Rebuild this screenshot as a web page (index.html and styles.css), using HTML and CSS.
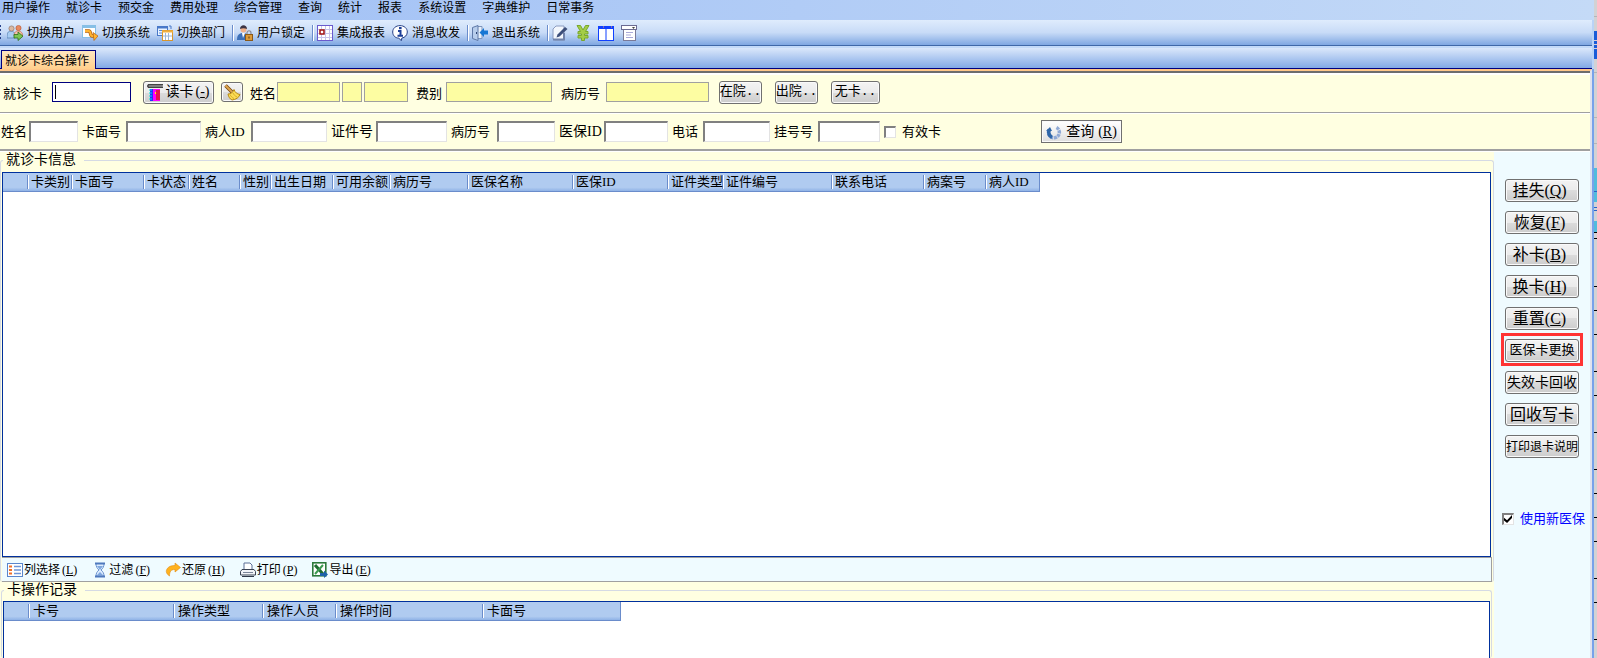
FILE: index.html
```html
<!DOCTYPE html>
<html lang="zh-CN">
<head>
  <meta charset="UTF-8" />
  <meta name="viewport" content="width=device-width, initial-scale=1.0" />
  <title>就诊卡综合操作</title>
  <link rel="stylesheet" href="styles.css">
</head>
<body>

  <div class="window">
    <nav class="menubar">
      <a href="#">用户操作</a>
      <a href="#">就诊卡</a>
      <a href="#">预交金</a>
      <a href="#">费用处理</a>
      <a href="#">综合管理</a>
      <a href="#">查询</a>
      <a href="#">统计</a>
      <a href="#">报表</a>
      <a href="#">系统设置</a>
      <a href="#">字典维护</a>
      <a href="#">日常事务</a>
    </nav>

    <div class="toolbar">
      <span class="grip"></span>
      <button>
        <svg width="16" height="16" viewBox="0 0 16 16"><path d="M0 13c0-5 1-7 4-7s4 2 4 7z" fill="#a9cdf2" stroke="#4f79ad" stroke-width=".7"/><path d="M7 11c0-4 2-5 4.500-5S16 8 15.500 11z" fill="#f4c4ae" stroke="#c45e3c" stroke-width=".6"/><circle cx="4.500" cy="3.500" r="2.600" fill="#d9b8a2" stroke="#8a6a5a" stroke-width=".6"/><circle cx="11.500" cy="3" r="2.600" fill="#e88a62" stroke="#b5502c" stroke-width=".6"/><path d="M7 9.500h4V7l5 4.200-5 4.300V13H7z" fill="#7cc653" stroke="#2c6f1a" stroke-width=".8"/></svg>
        切换用户
      </button>
      <button>
        <svg width="16" height="16" viewBox="0 0 16 16"><rect x=".5" y=".5" width="13" height="12" fill="#fff" stroke="#86bfe6"/><path d="M1 2h12" stroke="#86bfe6" stroke-width="2"/><path d="M3 6h4c2 0 1 5 3 5h2" fill="none" stroke="#b8620c" stroke-width="3.500"/><path d="M3 6h4c2 0 1 5 3 5h2" fill="none" stroke="#ffb432" stroke-width="2"/><path d="M11 7.500l5 3.500-4 4.500z" fill="#ffb432" stroke="#b8620c" stroke-width=".7"/></svg>
        切换系统
      </button>
      <button>
        <svg width="16" height="16" viewBox="0 0 16 16"><rect x=".5" y="1.500" width="10" height="9" fill="#eaf3ff" stroke="#4878c8"/><path d="M0 2.500h11" stroke="#4878c8" stroke-width="2"/><path d="M2 5.500h4M2 8h3" stroke="#5b8ad6"/><rect x="5.500" y="5.500" width="10" height="10" fill="#fff" stroke="#d9962c"/><path d="M5 6.500h11" stroke="#f0b040" stroke-width="2"/><path d="M8.500 8v7M11.500 8v7M6 11h9" stroke="#9cb6d8"/><path d="M12 1h2v3" stroke="#4878c8" fill="none"/></svg>
        切换部门
      </button>
      <span class="sep"></span>
      <button>
        <svg width="16" height="16" viewBox="0 0 16 16"><path d="M0 15c0-5 2-7 6-7s6 2 6 7z" fill="#3d70b8"/><path d="M5 8l1 5 2-5z" fill="#fff"/><circle cx="6.500" cy="4.500" r="3" fill="#efb08a"/><path d="M3 4c0-5 7-5 7 0-2-1-5-1-7 0z" fill="#3b3345"/><path d="M10 10V8c0-3 4-3 4 0v2" fill="none" stroke="#8a8a94" stroke-width="1.200"/><rect x="8.500" y="9.500" width="7" height="6" fill="#dc9a3a" stroke="#8b5a18"/><path d="M12 11.500v2" stroke="#5a3a10"/></svg>
        用户锁定
      </button>
      <span class="sep"></span>
      <button>
        <svg width="16" height="16" viewBox="0 0 16 16"><rect x=".5" y=".5" width="15" height="15" fill="#fff" stroke="#6a5acd"/><path d="M4.500 1v14M8.500 1v14M12.500 1v14M1 4.500h14M1 8.500h14M1 12.500h14" stroke="#c8c4ea"/><rect x="3" y="5" width="4" height="4" fill="#fff" stroke="#a01010" stroke-width="1.500"/></svg>
        集成报表
      </button>
      <button>
        <svg width="16" height="16" viewBox="0 0 16 16"><path d="M8 .6c4.200 0 7.300 2.700 7.300 6.400 0 3.200-2.300 5.500-5.500 6.100l-.4 2.600-2.600-2.500C3 12.900.7 10.400.7 7 .7 3.300 3.800.6 8 .6z" fill="#fff" stroke="#243f86"/><rect x="7" y="2" width="2.600" height="2.200" fill="#1d3f98"/><path d="M6 6h2.500v4.500M5.500 10.800h5.500" fill="none" stroke="#1d3f98" stroke-width="2"/></svg>
        消息收发
      </button>
      <span class="sep"></span>
      <button>
        <svg width="16" height="16" viewBox="0 0 16 16"><path d="M4 1.500h6v12H4" fill="#e7f0fb" stroke="#7d95bd"/><path d="M.5 2.500L6 .5v15l-5.500-2z" fill="#b7cdec" stroke="#5f79a8"/><path d="M4.500 7v2" stroke="#2d4472"/><path d="M16 5.500h-4V3L7.500 7.500l4.500 4.500V9.500h4z" fill="#1777d4"/></svg>
        退出系统
      </button>
      <span class="sep"></span>
      <button title="编辑">
        <svg width="16" height="16" viewBox="0 0 16 16"><path d="M1 4l3-3h8v14H3l-2-1z" fill="#f3f7fd" stroke="#8c9cc0"/><path d="M1 14.500h11V8" fill="none" stroke="#7183ab" stroke-width="2"/><path d="M13 2l2.500 2-8 7.500-3 1 1-3z" fill="#3d4f7a"/></svg>
      </button>
      <button title="收费">
        <svg width="16" height="16" viewBox="0 0 16 16"><path d="M2 .5h3.500L8 5l2.500-4.500H14L10.500 6.500H13V9H9.500v1.500H13V13H9.500v2.500h-3V13H3v-2.500h3.500V9H3V6.500h2.500z" fill="#a4cd48" stroke="#79a82a"/></svg>
      </button>
      <button title="平铺">
        <svg width="16" height="16" viewBox="0 0 16 16"><rect x=".5" y="2" width="15" height="13.500" fill="#fff" stroke="#1040ff"/><path d="M0 2.500h16" stroke="#1040ff" stroke-width="3"/><path d="M8 2v14" stroke="#1040ff"/><path d="M5 2h1M13 2h1" stroke="#ff9a50"/></svg>
      </button>
      <button title="窗口">
        <svg width="16" height="16" viewBox="0 0 16 16"><rect x="2.500" y="4.500" width="12" height="11" fill="#fff" stroke="#7a7a98"/><rect x=".5" y=".5" width="15" height="4" fill="#fff" stroke="#6a6a92"/><path d="M11 2h3l-1.500 2z" fill="#444"/><path d="M5 7.500h7M5 10h5M5 12.500h7" stroke="#a9a9d8"/></svg>
      </button>
    </div>

    <div class="tabs">
      <a href="#" class="tab">就诊卡综合操作</a>
    </div>

    <div class="workspace">
      <form class="page">
        <div class="card-row">
          <div class="field">
            <label for="cardNo" class="l-card">就诊卡</label>
            <input type="text" id="cardNo" class="focused w-card">
          </div>
          <button type="button" class="btn read-btn">
            <svg width="16" height="17" viewBox="0 0 16 17"><path d="M1 .5h15v3H1z" fill="#ddd" stroke="#444"/><path d="M0 2h15" stroke="#222"/><rect x="3" y="5" width="3" height="12" fill="#2b2bff"/><rect x="6" y="5" width="7" height="12" fill="#f0f"/><rect x="9" y="6" width="4" height="10" fill="#e8124c"/><path d="M2 6h3M2 9h3M2 12h3M2 15h3" stroke="#00e0e0"/><path d="M8.500 8v2" stroke="#ff0"/></svg>
            读卡<span>(<u>-</u>)</span>
          </button>
          <button type="button" class="btn clear-btn" title="清空">
            <svg width="17" height="17" viewBox="0 0 17 17"><path d="M1.500 1.500L8 8" stroke="#7a4a10" stroke-width="3.500"/><path d="M1.500 1.500L8 8" stroke="#e0a850" stroke-width="1.800"/><path d="M10 5.500c1 3 3 4.500 6 5-1 3-4 5-8 5.500-2-1-3.500-3-4-6 3 0 5-1.500 6-4.500z" fill="#fbdc55" stroke="#b98a12"/><path d="M6 10.500c1 2 2 3 4 4M9 9c1 2 2 3 4 4" fill="none" stroke="#d9ab28"/></svg>
          </button>
          <div class="field">
            <label for="name" class="l-name">姓名</label>
            <input type="text" id="name" class="locked w-name" readonly>
            <input type="text" class="locked w-sex" aria-label="性别" readonly>
            <input type="text" class="locked w-age" aria-label="年龄" readonly>
          </div>
          <div class="field">
            <label for="feeType" class="l-fee">费别</label>
            <input type="text" id="feeType" class="locked w-fee" readonly>
          </div>
          <div class="field">
            <label for="recordNo" class="l-record">病历号</label>
            <input type="text" id="recordNo" class="locked w-record" readonly>
          </div>
          <div class="status-btns">
            <button type="button" class="btn">在院..</button>
            <button type="button" class="btn">出院..</button>
            <button type="button" class="btn wide">无卡..</button>
          </div>
        </div>

        <div class="search-row">
          <label for="qName" class="first">姓名</label><input type="text" id="qName">
          <label for="qFace">卡面号</label><input type="text" id="qFace">
          <label for="qPid">病人ID</label><input type="text" id="qPid">
          <label for="qCert" class="large">证件号</label><input type="text" id="qCert">
          <label for="qRecord">病历号</label><input type="text" id="qRecord">
          <label for="qIns" class="large">医保ID</label><input type="text" id="qIns">
          <label for="qTel">电话</label><input type="text" id="qTel">
          <label for="qReg">挂号号</label><input type="text" id="qReg">
          <label class="check"><input type="checkbox">有效卡</label>
          <button type="button" class="btn query-btn">
            <svg width="16" height="16" viewBox="0 0 16 16"><path d="M10.500 3.500a5.500 5.500 0 1 1-7 1.500" fill="none" stroke="#8fa9d6" stroke-width="3.400" stroke-dasharray="3 .7"/><path d="M6 13.300A5.500 5.500 0 0 1 3.200 6" fill="none" stroke="#2f66a8" stroke-width="3.600"/><path d="M0 7l4-4 2 4z" fill="#2f66a8"/></svg>
            查询<span>(<u>R</u>)</span>
          </button>
        </div>

        <div class="content">
          <div class="main">
            <fieldset class="info">
              <legend>就诊卡信息</legend>
              <div class="grid-box">
                <table class="info-table">
                  <colgroup>
                    <col class="c26"><col class="c44"><col class="c72"><col class="c45">
                    <col class="c51"><col class="c31"><col class="c62"><col class="c57">
                    <col class="c78"><col class="c105"><col class="c95"><col class="c55">
                    <col class="c109"><col class="c92"><col class="c62"><col class="c52">
                  </colgroup>
                  <thead>
                    <tr>
                      <th></th>
                      <th>卡类别</th>
                      <th>卡面号</th>
                      <th>卡状态</th>
                      <th>姓名</th>
                      <th>性别</th>
                      <th>出生日期</th>
                      <th>可用余额</th>
                      <th>病历号</th>
                      <th>医保名称</th>
                      <th>医保ID</th>
                      <th>证件类型</th>
                      <th>证件编号</th>
                      <th>联系电话</th>
                      <th>病案号</th>
                      <th>病人ID</th>
                    </tr>
                  </thead>
                </table>
              </div>
              <div class="grid-tools">
                <button type="button">
                  <svg width="16" height="14" viewBox="0 0 16 14"><rect x=".5" y=".5" width="15" height="13" fill="#fff" stroke="#5a86cc"/><path d="M2 3.500h3M2 10.500h3" stroke="#f07028" stroke-width="2"/><path d="M2 7h3" stroke="#f07028" stroke-width="2"/><path d="M7 3.500h7M7 7h7M7 10.500h7" stroke="#6c96d8" stroke-width="1.500"/></svg>
                  列选择<span>(<u>L</u>)</span>
                </button>
                <button type="button">
                  <svg width="16" height="16" viewBox="0 0 16 16"><path d="M4 1.500h8c0 3-1 5-3 6.500 2 1.500 3 3.500 3 6H4c0-2.500 1-4.500 3-6-2-1.500-3-3.500-3-6.500z" fill="#dcecff" stroke="#6b93cf"/><path d="M3 1.500h10M3 14.500h10" stroke="#4e79bd" stroke-width="2"/><path d="M5 4h6l-3 4zM5 13l3-3 3 3z" fill="#7fa7de"/></svg>
                  过滤<span>(<u>F</u>)</span>
                </button>
                <button type="button">
                  <svg width="16" height="16" viewBox="0 0 16 16"><path d="M10 1l5.500 4.500L10 10V7.500c-4 0-5.500 2-5.500 6.500C1.500 12 .5 9.500 2 7c1.500-2.500 4-3.500 8-3.500z" fill="#ffb21e" stroke="#e08a10" stroke-width=".6"/></svg>
                  还原<span>(<u>H</u>)</span>
                </button>
                <button type="button">
                  <svg width="16" height="16" viewBox="0 0 16 16"><path d="M4 8V1h6l2 2v5" fill="#fff" stroke="#5b6f96"/><path d="M2 7.500h12l1.500 2V13H.5V9.500z" fill="#f2f4f8" stroke="#3a4252"/><path d="M3 10.500h10" stroke="#7a8498"/><path d="M2 14.500h12" stroke="#2e3646"/></svg>
                  打印<span>(<u>P</u>)</span>
                </button>
                <button type="button">
                  <svg width="16" height="16" viewBox="0 0 16 16"><rect x=".8" y=".8" width="13" height="13" fill="#fff" stroke="#2c7a3c" stroke-width="1.600"/><path d="M3 3l8 9" stroke="#1e6c30" stroke-width="3"/><path d="M11 3l-8 9" stroke="#3c9a50" stroke-width="2"/><path d="M8 11h4V8.500l4 4-4 3.500v-2H8z" fill="#1c62a8"/></svg>
                  导出<span>(<u>E</u>)</span>
                </button>
              </div>
            </fieldset>

            <fieldset class="log">
              <legend>卡操作记录</legend>
              <div class="grid-box">
                <table class="log-table">
                  <colgroup>
                    <col class="c26"><col class="c145"><col class="c89"><col class="c73"><col class="c147"><col class="c136">
                  </colgroup>
                  <thead>
                    <tr>
                      <th></th>
                      <th>卡号</th>
                      <th>操作类型</th>
                      <th>操作人员</th>
                      <th>操作时间</th>
                      <th>卡面号</th>
                    </tr>
                  </thead>
                </table>
              </div>
            </fieldset>
          </div>

          <aside class="side">
            <button type="button" class="btn key">挂失<span>(<u>Q</u>)</span></button>
            <button type="button" class="btn key">恢复<span>(<u>F</u>)</span></button>
            <button type="button" class="btn key">补卡<span>(<u>B</u>)</span></button>
            <button type="button" class="btn key">换卡<span>(<u>H</u>)</span></button>
            <button type="button" class="btn key">重置<span>(<u>C</u>)</span></button>
            <div class="marked">
              <button type="button" class="btn small">医保卡更换</button>
            </div>
            <button type="button" class="btn medium">失效卡回收</button>
            <button type="button" class="btn">回收写卡</button>
            <button type="button" class="btn tiny">打印退卡说明</button>
            <label class="check new-ins"><input type="checkbox" checked>使用新医保</label>
          </aside>
        </div>
      </form>
    </div>
  </div>

  <!-- sliver of the window behind -->
  <div class="behind">
    <svg width="3" height="658" viewBox="0 0 3 658">
      <path d="M0 16.500h3M0 72.500h3M0 117.500h3M0 143.500h3" stroke="#b4b4b8"/>
      <path d="M0 31h3v28H0z" fill="#1a5cd8"/>
      <path d="M0 40.500h3M0 44.500h3M0 48.500h3" stroke="#d8d0d8"/>
      <path d="M0 168h3v34H0zM0 221h3v12H0z" fill="#52bcdc"/>
      <path d="M0 191.500h3M0 207.500h3M0 210.500h3" stroke="#2a62c8"/>
      <path d="M0 232.500h3M0 238.500h3M0 286.500h3M0 310.500h3M0 334.500h3M0 371.500h3M0 395.500h3M0 432.500h3M0 469.500h3M0 493.500h3M0 517.500h3M0 541.500h3M0 578.500h3M0 602.500h3M0 639.500h3" stroke="#000"/>
    </svg>
  </div>

</body>
</html>
```

FILE: styles.css
```css
* {
  box-sizing: border-box;
}
body {
  margin: 0;
  height: 100vh;
  display: flex;
  overflow: hidden;
  color: #000;
  font-family: "Liberation Serif", "Noto Sans CJK SC", sans-serif;
  font-size: 13px;
  line-height: 16px;
}
button, input {
  margin: 0;
  padding: 0;
  font: inherit;
  color: inherit;
}
button {
  border: none;
  background: none;
  white-space: nowrap;
}
svg {
  display: block;
  flex: none;
}
a {
  color: inherit;
  text-decoration: none;
}
.window {
  flex: 1;
  min-width: 0;
  display: flex;
  flex-direction: column;
  background: #bad3f6;
}

/* menu and toolbar */
.menubar {
  display: flex;
  gap: 16px;
  height: 20px;
  padding-left: 2px;
  background: linear-gradient(90deg, #9ebef5, #c4daf7);
  font-size: 12px;
}
.toolbar {
  display: flex;
  align-items: center;
  gap: 7px;
  height: 26px;
  margin-right: 2px;
  background: linear-gradient(#dfecfd, #c8dbf7 50%, #7fa7e2);
  border-bottom: 1px solid #3f68a8;
  font-size: 12px;
}
.toolbar button {
  display: flex;
  align-items: center;
  gap: 4px;
}
.grip {
  width: 1px;
  height: 16px;
  margin-right: -1px;
  background: repeating-linear-gradient(#27418a 0 2px, transparent 2px 4px);
}
.sep {
  width: 2px;
  height: 16px;
  margin-right: -4px;
  background: #6a8ccb;
  border-right: 1px solid #fff;
}
.tabs {
  height: 23px;
  margin-right: 2px;
  padding: 4px 0 0 1px;
  background: linear-gradient(#c3daf9 0 2px, #dbe8fb 2px, #83aae6);
  border-bottom: 1px solid #00007f;
}
.tab {
  display: block;
  width: 95px;
  height: 19px;
  padding: 2px 0 0 3px;
  background: linear-gradient(#ffe6c0, #ffcf8c);
  border: 1px solid #00007f;
  border-bottom: none;
  font-size: 12px;
}

/* form rows */
.workspace {
  flex: 1;
  min-height: 0;
  display: flex;
  border-right: 2px solid #78a2ea;
}
.page {
  flex: 1;
  min-width: 0;
  display: flex;
  flex-direction: column;
  background: #ffffe1;
  border-top: 2px solid #ffc78a;
  border-right: 2px solid #dfe3ee;
}
.card-row {
  display: flex;
  align-items: center;
  gap: 7px;
  height: 42px;
  padding: 0 0 1px 3px;
  border-top: 2px solid #6d6d6d;
  border-bottom: 1px solid #a0a0a0;
  box-shadow: inset 0 2px #fff;
}
.field {
  display: flex;
  align-items: center;
  gap: 2px;
}
.field label {
  flex: none;
  margin-right: -2px;
  padding-top: 3px;
}
.field input {
  height: 20px;
  border: 1px solid #a0a0a0;
}
.field .focused {
  padding-left: 1px;
  border-color: #00007f;
  background: linear-gradient(#000, #000) 2px 2px / 1px 14px no-repeat #fff;
  outline: none;
}
.field .locked {
  background: #fdfda2;
}
.l-card { width: 49px; }
.l-name { width: 27px; }
.l-fee { width: 31px; padding-left: 1px; }
.l-record { width: 47px; padding-left: 2px; }
.w-card { width: 79px; }
.w-name { width: 63px; }
.w-sex { width: 20px; }
.w-age { width: 44px; }
.w-fee { width: 106px; }
.w-record { width: 103px; }

.btn {
  display: flex;
  align-items: center;
  justify-content: center;
  height: 23px;
  border: 1px solid #707070;
  border-radius: 3px;
  background: linear-gradient(#f3f3f3, #ebebeb 50%, #dcdcdc 50%, #cdcdcd);
  box-shadow: inset 0 0 0 1px #fafafa;
}
.read-btn {
  width: 71px;
  margin-left: 5px;
  gap: 2px;
  font-size: 14px;
}
.clear-btn {
  width: 22px;
  height: 20px;
}
.status-btns {
  display: flex;
  gap: 13px;
  margin-left: 3px;
  font-family: "Liberation Mono", "Noto Sans CJK SC", monospace;
}
.status-btns .btn {
  width: 43px;
}
.status-btns .wide {
  width: 49px;
}
.search-row {
  display: grid;
  grid-template-columns: 29px 49px 48px 75px 50px 76px 49px 71px 50px 58px 49px 64px 35px 67px 48px 62px 161px 81px;
  align-items: center;
  height: 38px;
  border-top: 1px solid #fff;
  border-bottom: 2px solid #a0a0a0;
}
.search-row label {
  padding-left: 4px;
  white-space: nowrap;
}
.search-row .first {
  padding-left: 1px;
}
.search-row .large {
  font-size: 14px;
}
.search-row input[type="text"] {
  width: 100%;
  height: 21px;
  background: #fff;
  border: 1px solid #e3e3e3;
  border-top: 2px solid #808080;
  border-left: 2px solid #808080;
}
.check {
  display: flex;
  align-items: center;
  gap: 6px;
}
.check input {
  appearance: none;
  flex: none;
  width: 12px;
  height: 12px;
  background: #fff;
  border: 1px solid #e3e3e3;
  border-top: 2px solid #808080;
  border-left: 2px solid #808080;
}
.check input:checked::after {
  content: "";
  display: block;
  width: 8px;
  height: 8px;
  background: #000;
  clip-path: polygon(0 35%, 38% 65%, 100% 0, 100% 38%, 38% 100%, 0 70%);
}
.query-btn {
  gap: 4px;
  border-radius: 0;
  background: linear-gradient(#fff, #f0f0f0 50%, #dedede);
  font-size: 14px;
}

/* tables */
.content {
  flex: 1;
  min-height: 0;
  display: flex;
  border-top: 1px solid #fff;
}
.main {
  flex: 1;
  min-width: 0;
  display: flex;
  flex-direction: column;
}
fieldset {
  min-width: 0;
  margin: 0;
  border: 1px solid #d5dae4;
  border-bottom: none;
  border-radius: 3px;
}
legend {
  margin-left: 1px;
  padding: 0 8px 0 3px;
  font-size: 14px;
}
.info {
  padding: 4px 1px 0;
}
.log {
  flex: 1;
  display: flex;
  flex-direction: column;
  margin: 0 2px 0 1px;
  padding: 3px 1px 0;
}
.grid-box {
  background: #fff;
  border: 1px solid #00309c;
}
.info .grid-box {
  height: 385px;
  margin-right: 1px;
}
.log .grid-box {
  flex: 1;
  border-bottom: none;
}
table {
  table-layout: fixed;
  border-collapse: separate;
  border-spacing: 0;
  border-right: 1px solid #6a8ccb;
}
.info-table { width: 1037px; }
.log-table { width: 617px; }
th {
  height: 19px;
  padding: 0 0 0 2px;
  overflow: hidden;
  font-weight: normal;
  line-height: 18px;
  text-align: left;
  white-space: nowrap;
  background:
    linear-gradient(#6a8ccb, #6a8ccb) right 1px top 2px / 1px 14px no-repeat,
    linear-gradient(#fff, #fff) right 0 top 2px / 1px 14px no-repeat,
    linear-gradient(#b0cbf0 80%, #8fb2e6);
  border-bottom: 1px solid #6a8ccb;
}
th:last-child {
  background: linear-gradient(#b0cbf0 80%, #8fb2e6);
}
.log th {
  padding-left: 3px;
}
.c26 { width: 26px; }
.c31 { width: 31px; }
.c44 { width: 44px; }
.c45 { width: 45px; }
.c51 { width: 51px; }
.c52 { width: 52px; }
.c55 { width: 55px; }
.c57 { width: 57px; }
.c62 { width: 62px; }
.c72 { width: 72px; }
.c73 { width: 73px; }
.c78 { width: 78px; }
.c89 { width: 89px; }
.c92 { width: 92px; }
.c95 { width: 95px; }
.c105 { width: 105px; }
.c109 { width: 109px; }
.c136 { width: 136px; }
.c145 { width: 145px; }
.c147 { width: 147px; }

.grid-tools {
  display: flex;
  align-items: center;
  gap: 15px;
  height: 25px;
  padding-left: 5px;
  background: #effbff;
  border: 1px solid #a0a0a0;
  border-left: none;
  font-size: 12px;
}
.grid-tools button {
  display: flex;
  align-items: center;
  gap: 1px;
}
.grid-tools span {
  margin-left: 1px;
}

/* right hand buttons */
.side {
  flex: none;
  width: 96px;
  display: flex;
  flex-direction: column;
  gap: 9px;
  padding: 27px 0 0 11px;
  background: #effbff;
  font-size: 16px;
}
.side .btn {
  flex: none;
  width: 74px;
}
.side .key {
  padding-right: 5px;
}
.side .medium {
  font-size: 14px;
}
.side .small {
  padding-bottom: 2px;
  font-size: 13px;
}
.side .tiny {
  font-size: 12px;
}
.marked {
  width: 82px;
  margin: -6px 0 -4px -4px;
  padding: 3px 1px 1px;
  border: 3px solid #ff3434;
}
.new-ins {
  margin: 44px 0 0 -3px;
  color: #00f;
  font-size: 13px;
  white-space: nowrap;
}
.behind {
  flex: none;
  width: 3px;
  background: #d2d2d4;
}
```
